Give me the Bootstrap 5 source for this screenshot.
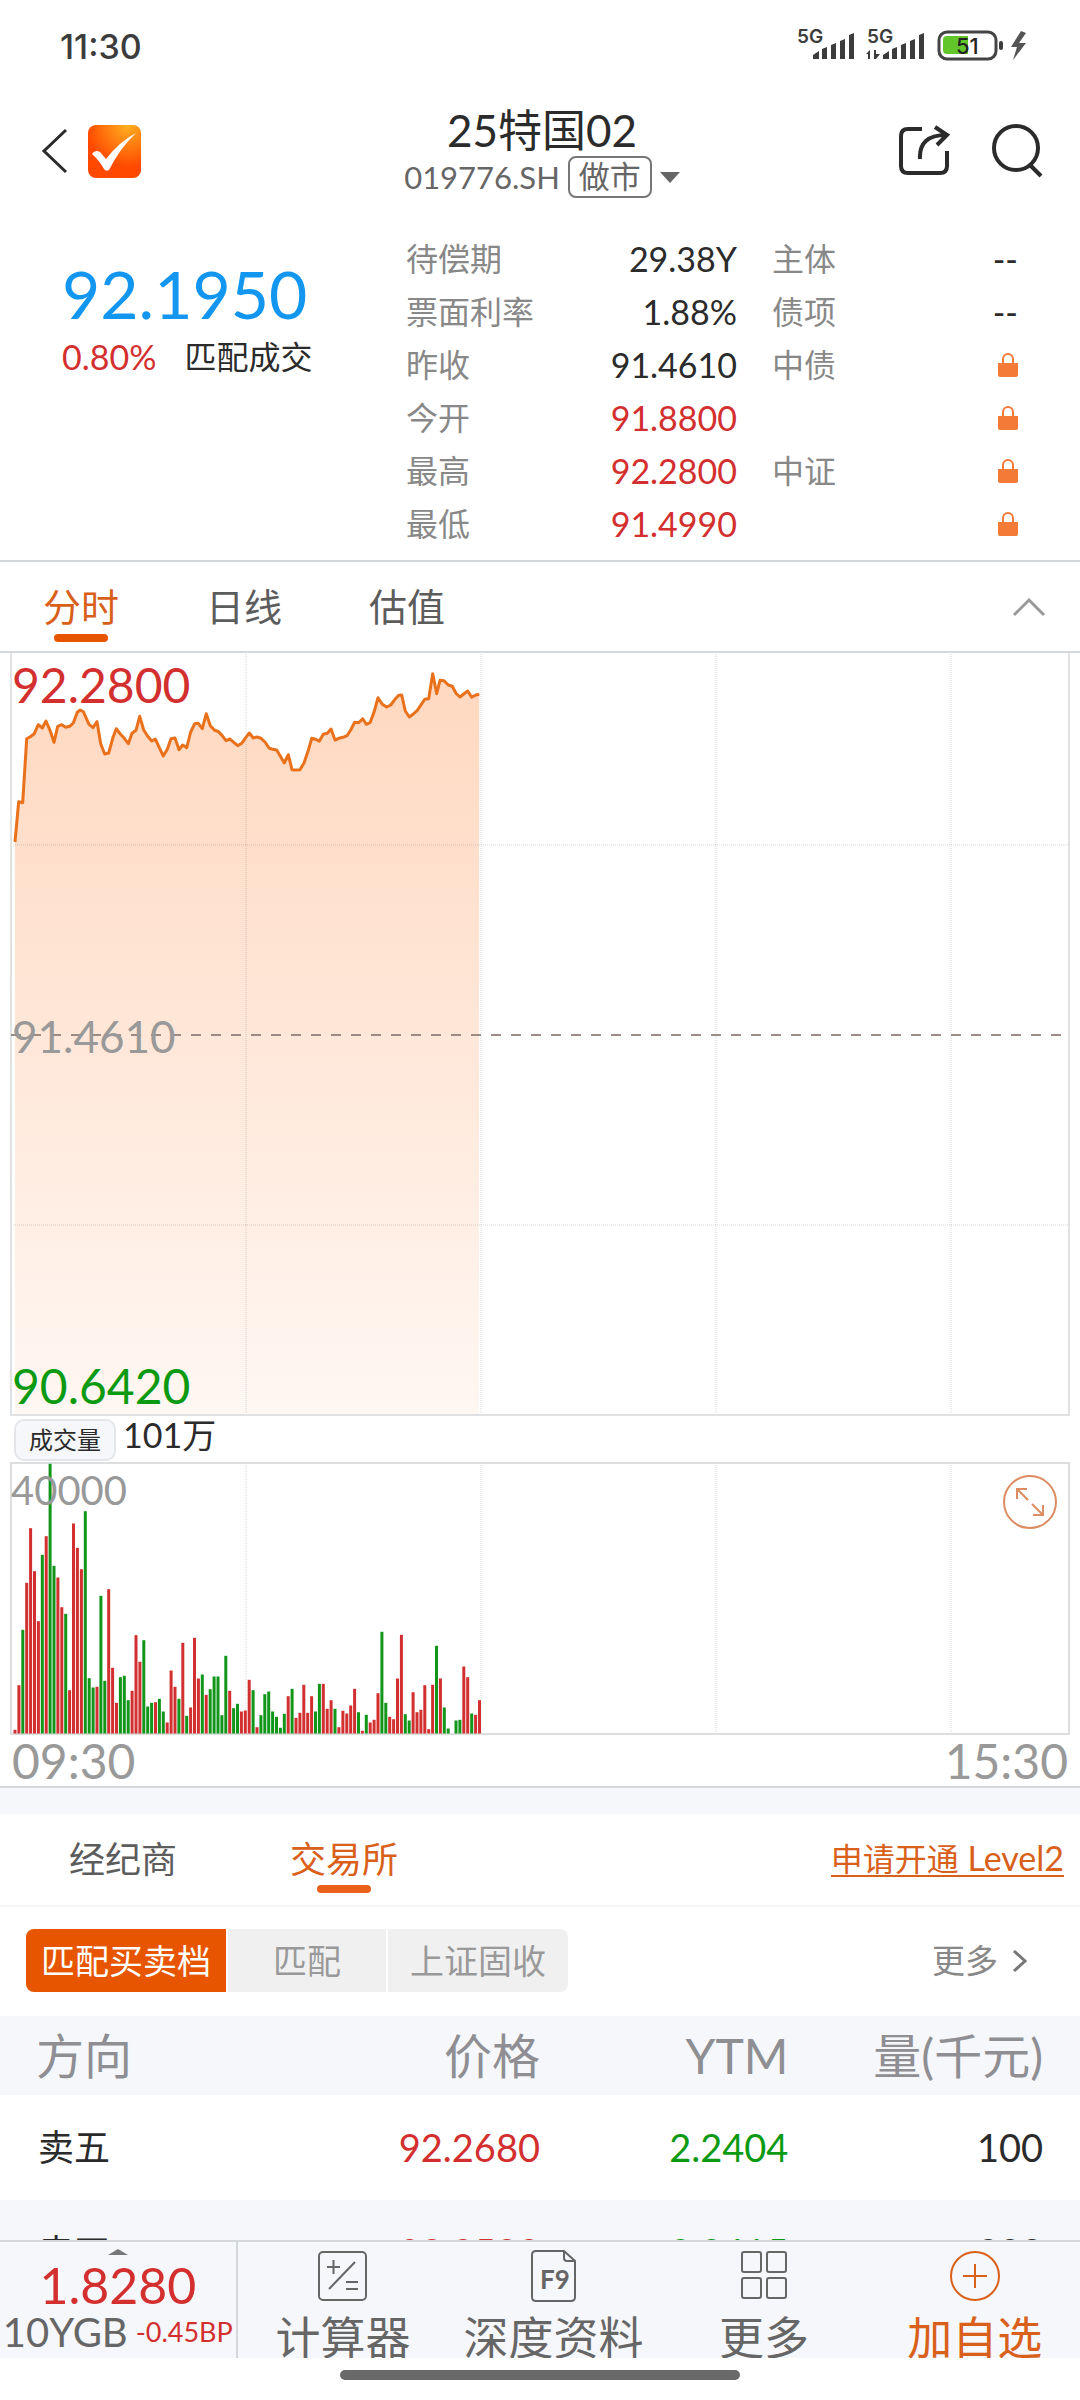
<!DOCTYPE html>
<html lang="zh-CN">
<head>
<meta charset="utf-8">
<meta name="viewport" content="width=device-width, initial-scale=1">
<title>25特国02</title>
<link href="https://cdn.jsdelivr.net/npm/bootstrap@5.3.0/dist/css/bootstrap.min.css" rel="stylesheet">
<style>
:root{--ink:#2b2b2b;--grey:#888;--mid:#666;--up:#d32f2f;--down:#0c9a12;--accent:#e85500;--band:#f6f7fa;--rule:#d5d8db}
body{font-family:Lato,"Noto Sans CJK SC",sans-serif;color:var(--ink);background:#fff;font-size:34px;line-height:53px;overflow-x:hidden}
svg{display:block;flex:none}
button{border:0;background:none;padding:0;color:inherit}
a{color:inherit;text-decoration:none}
.c-up{color:var(--up)}.c-down{color:var(--down)}.c-mid{color:var(--mid)}.c-accent{color:#d9601a}
.statusbar{height:92px;padding:0 52px 0 60px;font-family:Inter,sans-serif;font-weight:500;font-size:34px;color:#3c3c3c}
.topbar{height:140px;padding:8px 36px 30px 40px}
.topbar .side{width:200px}
.topbar .actions{gap:42px}
.title-line{font-size:44px;line-height:52px}
.code-line{font-size:31px;line-height:42px;color:var(--mid);gap:8px}
.tag{border:2px solid #777;border-radius:8px;padding:0 9px;height:42px;line-height:36px}
.quote{display:grid;grid-template-columns:344fr 331fr 281fr;padding:0 62px 10px;border-bottom:2px solid var(--rule)}
.quote dl{margin:0}
.quote dl>div{height:53px}
.quote dt{font-weight:400;font-size:32px;color:var(--grey)}
.quote dd{margin:0}
.rating{padding-left:35px}
.big{font-size:66px;line-height:76px;color:#1296f0;padding-top:24px}
.sub{gap:28px;line-height:50px}
.sub .deal{font-size:32px}
.tabs{height:91px;padding:0 34px 0 43px;border-bottom:2px solid var(--rule)}
.tabs .list{gap:87px;font-size:38px}
.tab{position:relative;color:#5c5c5c}
.tab.on{color:#d9601a}
.tab.on::after{content:"";position:absolute;left:50%;margin-left:-27px;bottom:-9px;width:54px;height:8px;border-radius:4px;background:var(--accent)}
.plot{position:relative;margin:0 10px}
.plot svg{width:100%}
.plot .lbl{position:absolute;left:2px;font-size:48px;line-height:50px}
.lbl.hi{top:7px}.plot .lbl.base{top:50%;margin-top:-24px;font-size:44px;color:#999}.lbl.lo{bottom:5px}
.plot .lbl.vmax{font-size:40px;top:3px;left:1px;color:#999}
.plot .expand,.plot .expand svg{width:56px}
.expand{position:absolute;right:12px;top:12px}
.volhead{height:46px;padding:0 14px;font-size:34px;line-height:38px;gap:7px}
.pill{border:2px solid #e4e6e9;border-radius:10px;background:var(--band);font-size:24px;line-height:36px;padding:0 13px;height:42px;margin-top:3px}
.times{height:53px;padding:0 12px;font-size:48px;line-height:52px;color:#999;border-bottom:2px solid var(--rule)}
.band{height:26px;background:var(--band)}
.tabs2{height:93px;padding:0 16px 0 69px;border-bottom:2px solid #f5f5f6}
.tabs2 .list{gap:113px;font-size:36px}
.tabs2 .tab.on::after{bottom:-7px;background:#eb611b}
.lv2{line-height:32px;font-size:34px;border-bottom:2px solid #d9601a}
.lv2 .cjk{font-size:32px}
.filter{padding:22px 52px 24px 26px}
.seg{gap:2px;border-radius:8px;overflow:hidden;color:#999}
.seg button{height:63px;background:#f0f0f0;font-size:34px;line-height:62px;padding:0 22px}
.seg .on{background:var(--accent);color:#fff;padding:0 15px}
.seg .mid{padding:0 45px}
.more{font-size:33px;color:var(--grey);gap:14px}
.book{width:100%;table-layout:fixed;margin:0}
.book th,.book td{padding:0;text-align:right;font-weight:400}
.book th:first-child{text-align:left;padding-left:36px}
.book thead{background:var(--band);font-size:48px;line-height:79px;color:#8e8e93}
.book tbody{font-size:38px;line-height:105px}
.book tbody th{font-size:36px}
.book tbody th:first-child{padding-left:38px}
.book tbody tr:nth-child(even){background:var(--band)}
.book th:last-child,.book td:last-child{padding-right:37px}
.dock{background:#fff}
.dock .bar{height:118px;background:var(--band);border-top:2px solid var(--rule);overflow:hidden;color:var(--mid)}
.ygb{width:22%;border-right:2px solid var(--rule);padding-top:7px}
.ygb .num{font-size:50px;line-height:60px}
.ygb .cap-line{font-size:40px;line-height:34px;gap:8px;white-space:nowrap}
.ygb .bp{font-size:27px}
.dock .item{padding-top:8px;font-size:45px;line-height:56px;gap:8px;white-space:nowrap}
.homebar{height:42px;padding-top:12px}
.homebar span{width:37%;height:10px;border-radius:5px;background:#696969}
</style>
<script src="https://cdn.jsdelivr.net/npm/bootstrap@5.3.0/dist/js/bootstrap.bundle.min.js"></script>
</head>
<body>
<div class="statusbar d-flex justify-content-between align-items-center">
  <span>11:30</span>
  <svg width="232" height="40" viewBox="796 26 232 40" fill="#3c3c3c">
    <g font-family="Inter, sans-serif" font-size="19" font-weight="600"><text x="797" y="43">5G</text><text x="867" y="43">5G</text></g>
    <path id="sig" d="M813 59v-4l6-4v8zM822 59v-10l5-2v12zM831 59V45l5-2v16zM840 59V41l5-2v20zM849 59V35l5-2v26z"/>
    <use href="#sig" x="70"/>
    <path d="M866 54l4-4v9h-2v-5zM874 50h2v4h4l-4 5h-2z"/>
    <rect x="939" y="32" width="57" height="27" rx="8" fill="none" stroke="#444" stroke-width="3"/>
    <path d="M947 36h21v18h-21q-4 0-4-4V40q0-4 4-4z" fill="#62c62b"/>
    <rect x="999" y="41" width="4" height="9" rx="2"/>
    <text x="956" y="54" font-family="Inter, sans-serif" font-size="22" font-weight="500" fill="#222">51</text>
    <path d="M1021 31l-10 16h6l-4 13 13-17h-7l7-10z" fill="#555"/>
  </svg>
</div>

<header class="topbar d-flex justify-content-between align-items-center">
  <div class="side d-flex align-items-center">
    <button aria-label="返回"><svg width="30" height="48" viewBox="0 0 30 48" fill="none" stroke="#2b2b2b" stroke-width="3"><path d="M26 3L4 24l22 21"/></svg></button>
    <svg class="ms-3" width="56" height="54" viewBox="0 0 56 54"><defs><radialGradient id="app" cx=".75" cy="0" r=".8"><stop offset="0" stop-color="#ffb020"/><stop offset="1" stop-color="#ff4800"/></radialGradient></defs><rect x="2" y="1" width="53" height="53" rx="8" fill="url(#app)"/><path d="M6 30q3-5 8-2l6 7Q33 18 50 9 34 24 23 46q-3 2-5-1Q13 36 6 30z" fill="#fff"/></svg>
  </div>
  <div class="text-center">
    <div class="title-line">25特国02</div>
    <div class="code-line d-flex align-items-center justify-content-center">
      <span>019776.SH</span><span class="tag">做市</span>
      <svg width="20" height="11" viewBox="0 0 20 11"><path d="M0 0h20L10 11z" fill="#666"/></svg>
    </div>
  </div>
  <div class="side actions d-flex align-items-center justify-content-end">
    <button aria-label="分享"><svg width="52" height="54" viewBox="896 122 52 54" fill="none" stroke="#2b2b2b" stroke-width="4"><path d="M920 127h-14q-7 0-7 7v30q0 7 7 7h32q7 0 7-7v-15M918 157c-1-16 8-24 26-24M933 125l12 8-10 10"/></svg></button>
    <button aria-label="搜索"><svg width="52" height="54" viewBox="991 120 52 54" fill="none" stroke="#2b2b2b" stroke-width="4"><circle cx="1015" cy="144" r="22"/><path d="M1029 161l11 11"/></svg></button>
  </div>
</header>

<main>
<section class="quote">
  <div>
    <div class="big">92.1950</div>
    <div class="sub d-flex"><span class="c-up">0.80%</span><span class="deal">匹配成交</span></div>
  </div>
  <dl>
    <div class="d-flex justify-content-between"><dt>待偿期</dt><dd>29.38Y</dd></div>
    <div class="d-flex justify-content-between"><dt>票面利率</dt><dd>1.88%</dd></div>
    <div class="d-flex justify-content-between"><dt>昨收</dt><dd>91.4610</dd></div>
    <div class="d-flex justify-content-between"><dt>今开</dt><dd class="c-up">91.8800</dd></div>
    <div class="d-flex justify-content-between"><dt>最高</dt><dd class="c-up">92.2800</dd></div>
    <div class="d-flex justify-content-between"><dt>最低</dt><dd class="c-up">91.4990</dd></div>
  </dl>
  <dl class="rating">
    <div class="d-flex justify-content-between"><dt>主体</dt><dd>--</dd></div>
    <div class="d-flex justify-content-between"><dt>债项</dt><dd>--</dd></div>
    <div class="d-flex justify-content-between align-items-center"><dt>中债</dt><dd><svg width="20" height="24" viewBox="0 0 20 24"><path id="lock" d="M0 10h4V6a6 6 0 0 1 12 0v4h4v12q0 2-2 2H2q-2 0-2-2zM6 10h8V6a4 4 0 0 0-8 0z" fill="#f47a38"/></svg></dd></div>
    <div class="d-flex justify-content-end align-items-center"><dd><svg width="20" height="24"><use href="#lock"/></svg></dd></div>
    <div class="d-flex justify-content-between align-items-center"><dt>中证</dt><dd><svg width="20" height="24"><use href="#lock"/></svg></dd></div>
    <div class="d-flex justify-content-end align-items-center"><dd><svg width="20" height="24"><use href="#lock"/></svg></dd></div>
  </dl>
</section>

<nav class="tabs d-flex justify-content-between align-items-center">
  <div class="list d-flex"><a href="#" class="tab on">分时</a><a href="#" class="tab">日线</a><a href="#" class="tab">估值</a></div>
  <button aria-label="收起"><svg width="34" height="20" viewBox="0 0 34 20" fill="none" stroke="#999" stroke-width="3"><path d="M2 18L17 3l15 15"/></svg></button>
</nav>

<section class="plot">
  <svg id="price" height="763" viewBox="10 652 1060 763" preserveAspectRatio="none" fill="none">
    <defs><linearGradient id="fade" x1="0" y1="0" x2="0" y2="1"><stop offset="0" stop-color="#ffd8c0"/><stop offset="1" stop-color="#fff7f2"/></linearGradient></defs>
    <path id="area" fill="url(#fade)"/>
    <path d="M246 653v761M481 653v761M716 653v761M951 653v761M11 844h1058M11 1224h1058" stroke="#000" stroke-opacity=".16" stroke-dasharray="1 1"/>
    <path d="M11 652v762h1058V652" stroke="#dfe1e2" stroke-width="2"/>
    <path d="M11 1034h1050" stroke="#8a7a74" stroke-opacity=".85" stroke-width="2" stroke-dasharray="10 10"/>
    <path id="line" stroke="#e9711c" stroke-width="3" stroke-linejoin="round"/>
  </svg>
  <span class="lbl hi c-up">92.2800</span>
  <span class="lbl base">91.4610</span>
  <span class="lbl lo c-down">90.6420</span>
</section>

<div class="volhead d-flex"><button class="pill">成交量</button><span>101万</span></div>

<section class="plot">
  <svg id="volume" height="273" viewBox="10 1461 1060 273" preserveAspectRatio="none" fill="none">
    <path d="M246 1462v271M481 1462v271M716 1462v271M951 1462v271" stroke="#000" stroke-opacity=".16" stroke-dasharray="1 1"/>
    <rect x="11" y="1462" width="1058" height="271" stroke="#dcdedf" stroke-width="2"/>
    <g id="bars"></g>
  </svg>
  <span class="lbl vmax">40000</span>
  <button class="expand" aria-label="全屏"><svg width="56" height="56" viewBox="0 0 56 56" fill="none" stroke="#dc8c60" stroke-width="2"><circle cx="28" cy="28" r="26"/><path d="M15 25V15h10M15 15l11 11M41 31v10H31M41 41L30 30"/></svg></button>
</section>
<div class="times d-flex justify-content-between"><span>09:30</span><span>15:30</span></div>
<div class="band"></div>

<nav class="tabs2 d-flex justify-content-between align-items-center">
  <div class="list d-flex"><a href="#" class="tab">经纪商</a><a href="#" class="tab on">交易所</a></div>
  <a href="#" class="lv2 c-accent"><span class="cjk">申请开通</span> Level2</a>
</nav>

<div class="filter d-flex justify-content-between align-items-center">
  <div class="seg d-flex"><button class="on">匹配买卖档</button><button class="mid">匹配</button><button>上证固收</button></div>
  <a href="#" class="more d-flex align-items-center">更多<svg width="16" height="24" viewBox="0 0 16 24" fill="none" stroke="#777" stroke-width="3"><path d="M2 2l11 10L2 22"/></svg></a>
</div>

<table class="book">
  <colgroup><col style="width:24%"><col style="width:26%"><col style="width:23%"><col></colgroup>
  <thead><tr><th>方向</th><th>价格</th><th>YTM</th><th>量(千元)</th></tr></thead>
  <tbody>
    <tr><th>卖五</th><td class="c-up">92.2680</td><td class="c-down">2.2404</td><td>100</td></tr>
    <tr><th>卖四</th><td class="c-up">92.2500</td><td class="c-down">2.2415</td><td>200</td></tr>
  </tbody>
</table>
</main>

<footer class="dock fixed-bottom">
  <div class="bar d-flex">
    <div class="ygb d-flex flex-column align-items-center">
      <svg width="20" height="6" viewBox="0 0 20 6"><path d="M0 6L10 0l10 6z" fill="#777"/></svg>
      <div class="num c-up">1.8280</div>
      <div class="cap-line d-flex align-items-center"><span>10YGB</span><span class="bp c-up">-0.45BP</span></div>
    </div>
    <nav class="d-flex flex-fill">
      <a href="#" class="item col d-flex flex-column align-items-center"><svg width="50" height="52" viewBox="0 0 50 52" fill="none" stroke="#666" stroke-width="2"><rect x="1" y="2" width="47" height="48" rx="4"/><path d="M9 17h13M15.500 10v14M37 12L11 39M28 32h12M28 39h12"/></svg>计算器</a>
      <a href="#" class="item col d-flex flex-column align-items-center"><svg width="46" height="52" viewBox="0 0 46 52" fill="none" stroke="#666" stroke-width="2"><path d="M5 1h28l11 10v36q0 4-4 4H5q-4 0-4-4V5q0-4 4-4zM33 1v7q0 3 3 3h8"/><text x="9" y="39" font-family="Lato, sans-serif" font-weight="700" font-size="26" fill="#666" stroke="none">F9</text></svg>深度资料</a>
      <a href="#" class="item col d-flex flex-column align-items-center"><svg width="48" height="52" viewBox="0 0 48 52" fill="none" stroke="#666" stroke-width="2"><rect x="2" y="2" width="19" height="20" rx="2"/><rect x="27" y="2" width="19" height="20" rx="2"/><rect x="2" y="28" width="19" height="20" rx="2"/><rect x="27" y="28" width="19" height="20" rx="2"/></svg>更多</a>
      <a href="#" class="item col d-flex flex-column align-items-center c-accent"><svg width="50" height="52" viewBox="0 0 50 52" fill="none" stroke="#d9601a" stroke-width="2"><circle cx="25" cy="26" r="24"/><path d="M13 26h24M25 14v24"/></svg>加自选</a>
    </nav>
  </div>
  <div class="homebar d-flex justify-content-center"><span></span></div>
</footer>

<script>
// price curve, in thirds of a unit: x, y offset below 640
const curve="45,603 56,482 68,485 80,293 91,287 103,278 115,251 127,261 138,240 150,268 162,304 173,256 185,251 197,259 209,256 220,246 232,214 241,207 250,212 267,250 279,260 291,242 302,308 314,339 326,336 338,292 349,263 361,279 373,292 385,308 396,277 408,268 419,226 431,267 443,286 455,300 466,294 478,320 490,345 502,325 513,293 525,291 537,326 548,312 560,320 572,273 584,248 595,247 607,263 619,218 631,254 643,267 655,272 666,283 678,299 690,294 702,305 713,314 725,307 737,290 748,276 760,291 771,288 783,292 795,303 807,321 818,325 830,327 842,347 853,366 865,341 876,386 888,387 900,386 912,366 924,331 935,292 947,295 958,301 970,280 982,277 993,264 1005,297 1017,292 1029,289 1041,284 1052,267 1064,244 1076,245 1088,233 1099,250 1110,245 1122,214 1134,170 1147,190 1160,198 1172,192 1185,175 1196,163 1205,162 1216,210 1228,228 1240,219 1252,208 1274,175 1286,173 1298,98 1310,158 1320,118 1332,119 1345,132 1357,136 1368,157 1380,168 1391,159 1403,150 1415,169 1427,162 1438,160";
const pts=curve.split(" ").map(p=>{const [x,y]=p.split(",");return (x/3).toFixed(1)+" "+(640+y/3).toFixed(1)});
document.getElementById("line").setAttribute("d","M"+pts.join("L"));
document.getElementById("area").setAttribute("d","M15 1413L"+pts.join("L")+"L479 1413Z");
// one-minute volumes: direction and height in thirds of a unit
const vols="R11 R145 G311 R452 R616 R487 R337 G536 R592 G809 G503 R468 R379 G359 R130 R630 R557 R493 G667 G166 G138 R140 G413 G158 R433 R197 R92 G169 G173 G100 R128 R295 R215 G280 G81 G92 R94 G104 G66 R33 R189 R140 G104 R272 G53 R78 R287 R165 G177 R116 G133 G171 G171 G55 G233 R128 G76 G89 R66 R69 R161 G130 R19 G55 G118 G126 G66 G50 G17 G59 R112 G134 R47 R62 R146 R62 R112 G66 G149 R149 R74 R100 G74 R19 R68 R60 R84 R134 G64 R8 G56 R33 R41 R121 G305 G92 R50 R43 R165 R296 G58 G39 R124 R64 R71 R145 R13 R146 G263 R165 G78 G15 G0 G39 G41 R201 R169 G60 R56 R100";
document.getElementById("bars").innerHTML=vols.split(" ").map((v,i)=>{
  const h=v.slice(1)/3,x=13.5+3.903*i;
  return `<rect x="${x.toFixed(1)}" y="${(1732.5-h).toFixed(1)}" width="3" height="${h.toFixed(1)}" fill="${v[0]==="R"?"#d23030":"#12961a"}"/>`}).join("");
</script>
</body>
</html>
